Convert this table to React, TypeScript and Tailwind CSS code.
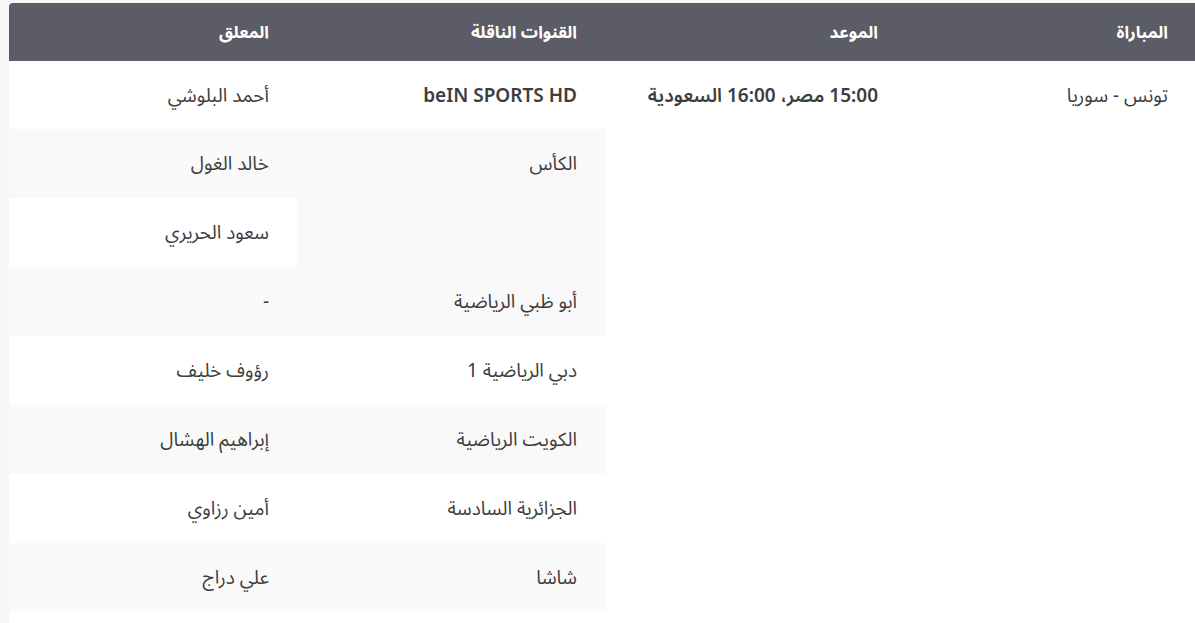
import React from "react";

const rows: { ch?: string; chSpan?: number; chBold?: boolean; com: string; bg: string; skipCh?: boolean; h: string }[] = [
  { ch: "beIN SPORTS HD", chBold: true, com: "أحمد البلوشي", bg: "bg-white", h: "h-[68px]" },
  { ch: "الكأس", chSpan: 2, com: "خالد الغول", bg: "bg-[#f9f9f9]", h: "h-[69px]" },
  { skipCh: true, com: "سعود الحريري", bg: "bg-white", h: "h-[69px]" },
  { ch: "أبو ظبي الرياضية", com: "-", bg: "bg-[#f9f9f9]", h: "h-[69px]" },
  { ch: "دبي الرياضية 1", com: "رؤوف خليف", bg: "bg-white", h: "h-[69px]" },
  { ch: "الكويت الرياضية", com: "إبراهيم الهشال", bg: "bg-[#f9f9f9]", h: "h-[69px]" },
  { ch: "الجزائرية السادسة", com: "أمين رزاوي", bg: "bg-white", h: "h-[69px]" },
  { ch: "شاشا", com: "علي دراج", bg: "bg-[#f9f9f9]", h: "h-[68px]" },
  { ch: "", com: "", bg: "bg-white", h: "h-[69px]" },
];

export default function App() {
  return (
    <div
      dir="rtl"
      className="w-[1195px] h-[623px] overflow-hidden bg-[#f7f7f7] pt-[3px] pl-[9px]"
      style={{ fontFamily: '"Noto Sans", "Noto Sans Arabic", "DejaVu Sans", sans-serif' }}
    >
      <table className="w-[1186px] table-fixed border-collapse bg-white text-[19px] text-[#3d3d3d]">
        <colgroup>
          <col className="w-[289px]" />
          <col className="w-[300px]" />
          <col className="w-[309px]" />
          <col className="w-[288px]" />
        </colgroup>
        <thead>
          <tr className="h-[58px] bg-[#5c5c66] text-white font-bold text-[17px]">
            <th className="text-right align-middle pr-[27px]">المباراة</th>
            <th className="text-right align-middle pr-[28px]">الموعد</th>
            <th className="text-right align-middle pr-[29px]">القنوات الناقلة</th>
            <th className="text-right align-middle pr-[28px] rounded-tl-[4px]">المعلق</th>
          </tr>
        </thead>
        <tbody>
          {rows.map((r, i) => (
            <tr key={i} className={`${r.h} ${r.bg}`}>
              {i === 0 && (
                <>
                  <td rowSpan={rows.length} className="bg-white align-top text-right pr-[27px] pt-[21px] leading-[26px]">
                    تونس - سوريا
                  </td>
                  <td rowSpan={rows.length} className="bg-white align-top text-right pr-[28px] pt-[21px] leading-[26px] font-semibold">
                    15:00 مصر، 16:00 السعودية
                  </td>
                </>
              )}
              {!r.skipCh && (
                <td
                  rowSpan={r.chSpan ?? 1}
                  className={`align-top text-right pr-[29px] pt-[21px] leading-[26px] ${r.chBold ? "font-semibold" : ""}`}
                >
                  {r.ch}
                </td>
              )}
              <td className="align-top text-right pr-[28px] pt-[21px] leading-[26px]">{r.com}</td>
            </tr>
          ))}
        </tbody>
      </table>
    </div>
  );
}
